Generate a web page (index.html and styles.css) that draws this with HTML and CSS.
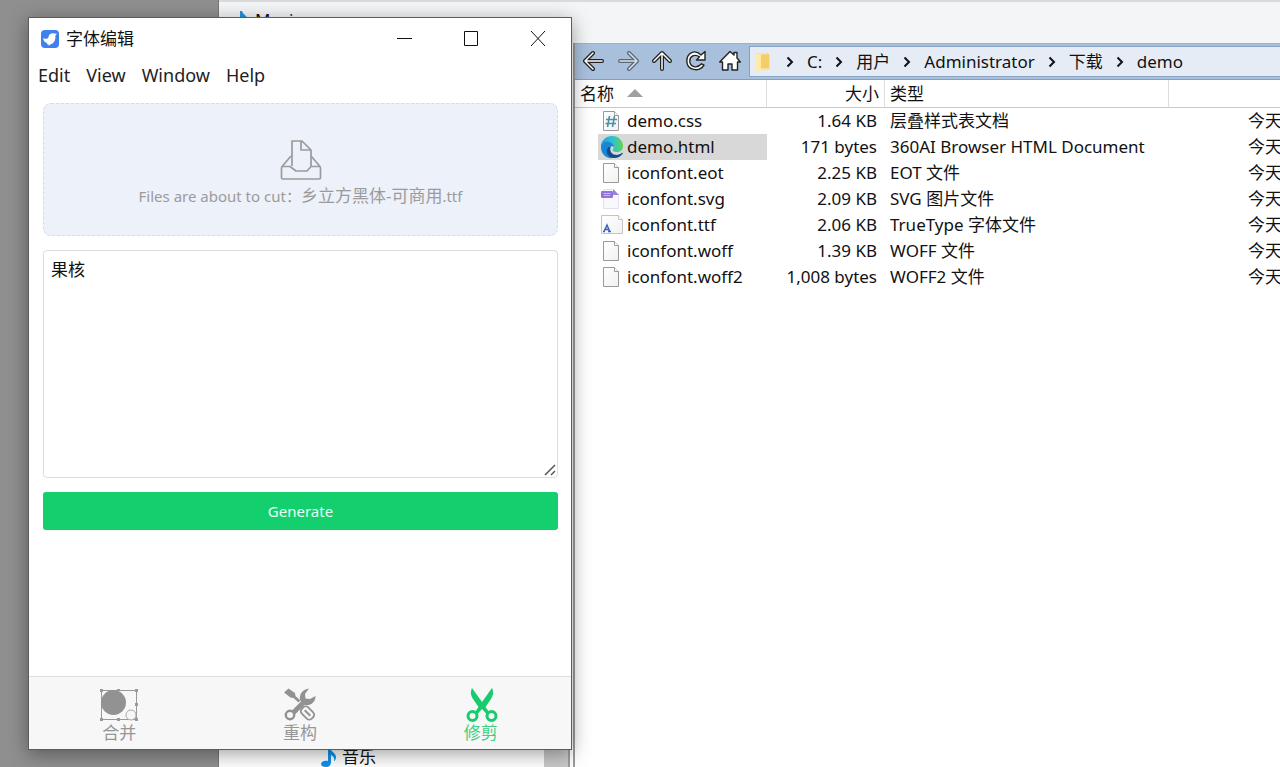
FILE: index.html
```html
<!DOCTYPE html>
<html lang="zh-CN">
<head>
<meta charset="utf-8">
<title>字体编辑</title>
<link rel="stylesheet" href="styles.css">
</head>
<body>
<div class="desktop">
  <section class="explorer">
    <header class="explorer-title">
      <svg class="note" width="16" height="20" viewBox="0 0 16 20"><path d="M7 1h2c1 4 6 5 6 9 0 2-1 4-2 4 1-3-1-5-3-6v7c0 3-2 5-5 5s-5-1-5-3 3-4 7-3z" fill="#1e96e0"/></svg>
      <span>Music</span>
    </header>
    <div class="explorer-body">
      <aside class="tree">
        <ul class="tree-list">
          <li class="tree-item">
            <svg class="note" width="16" height="20" viewBox="0 0 16 20"><path d="M7 1h2c1 4 6 5 6 9 0 2-1 4-2 4 1-3-1-5-3-6v7c0 3-2 5-5 5s-5-1-5-3 3-4 7-3z" fill="#0f92ec"/></svg>
            <span>音乐</span>
          </li>
        </ul>
        <div class="tree-scroll"></div>
      </aside>
      <div class="files">
        <nav class="toolbar">
          <button class="tool" aria-label="后退"><svg width="22" height="22" viewBox="0 0 22 22"><g class="ink-out"><path d="M3 11h16M10 3l-8 8 8 8"/></g><g class="ink-in"><path d="M3 11h16M10 3l-8 8 8 8"/></g></svg></button>
          <button class="tool dim" aria-label="前进"><svg width="22" height="22" viewBox="0 0 22 22"><g class="ink-out"><path d="M3 11h16M12 3l8 8-8 8"/></g><g class="ink-in"><path d="M3 11h16M12 3l8 8-8 8"/></g></svg></button>
          <button class="tool" aria-label="向上"><svg width="22" height="22" viewBox="0 0 22 22"><g class="ink-out"><path d="M11 19V3M3 11l8-8 8 8"/></g><g class="ink-in"><path d="M11 19V3M3 11l8-8 8 8"/></g></svg></button>
          <button class="tool" aria-label="刷新"><svg width="22" height="22" viewBox="0 0 22 22"><path d="M16 5 L20 1.500 V10 H11.500 L14.500 6.800 C9.500 3.500 4.800 6.500 4.800 11 C4.800 17 12 19 16.500 13.800 L19 15.200 C14.500 22.500 1.800 20.500 1.800 11 C1.800 2.500 10 -1 16 5Z" fill="#fff" stroke="#222" stroke-width="1.4" stroke-linejoin="round"/></svg></button>
          <button class="tool" aria-label="主页"><svg width="22" height="22" viewBox="0 0 22 22"><path d="M11 1.500 15 5V2.500h3V8l3.300 4H18.500v8H13v-6H9v6H3.500v-8H.7z" fill="#fff" stroke="#222" stroke-width="1.4" stroke-linejoin="round"/></svg></button>
          <div class="path">
            <svg width="15" height="20" viewBox="0 0 15 20"><path d="M0 1h12l2 2v14l-2 1H5l-3 2-2-1z" fill="#ffe08f"/><path d="M5 3l8-1v14H5z" fill="#f4cd66"/><path d="M0 1l5 2v15l-3 2-2-1z" fill="#ffe9ab"/></svg>
            <svg class="chev first" width="8" height="12" viewBox="0 0 8 12"><path d="M1.500 1.500 6 6l-4.500 4.500"/></svg>
            <button class="crumb">C:</button>
            <svg class="chev" width="8" height="12" viewBox="0 0 8 12"><path d="M1.500 1.500 6 6l-4.500 4.500"/></svg>
            <button class="crumb">用户</button>
            <svg class="chev" width="8" height="12" viewBox="0 0 8 12"><path d="M1.500 1.500 6 6l-4.500 4.500"/></svg>
            <button class="crumb">Administrator</button>
            <svg class="chev" width="8" height="12" viewBox="0 0 8 12"><path d="M1.500 1.500 6 6l-4.500 4.500"/></svg>
            <button class="crumb">下载</button>
            <svg class="chev" width="8" height="12" viewBox="0 0 8 12"><path d="M1.500 1.500 6 6l-4.500 4.500"/></svg>
            <button class="crumb">demo</button>
          </div>
        </nav>
        <svg width="0" height="0" class="defs">
          <defs>
            <linearGradient id="page" x1="0" y1="0" x2="1" y2="1"><stop offset="0" stop-color="#fff"/><stop offset="1" stop-color="#f1f1f1"/></linearGradient>
            <linearGradient id="edgeTop" x1="0" y1="0" x2="1" y2="0"><stop offset="0" stop-color="#1f9fe0"/><stop offset=".5" stop-color="#2cc0d6"/><stop offset="1" stop-color="#5fd653"/></linearGradient>
            <symbol id="doc" viewBox="0 0 24 24"><path d="M3.500 2.500h11l4 4v15h-15z" fill="url(#page)" stroke="#999"/><path d="M14.500 2.500v4h4" fill="#fff" stroke="#999"/></symbol>
          </defs>
        </svg>
        <table class="list">
          <colgroup><col class="c-name"><col class="c-size"><col class="c-type"><col></colgroup>
          <thead><tr>
            <th>名称 <svg class="sort" width="16" height="8" viewBox="0 0 16 8"><path d="M8 0l8 8H0z" fill="#a0a0a0"/></svg></th>
            <th class="size">大小</th><th>类型</th><th></th>
          </tr></thead>
          <tbody>
            <tr><td class="name"><div class="file"><svg width="24" height="24"><use href="#doc"/><g stroke="#4a8fa5" stroke-width="1.6" fill="none"><path d="M9.500 7 7.500 18M14.500 7l-2 11M6 10.500h11M5.500 14.500h10.500"/></g></svg><span>demo.css</span></div></td><td class="size">1.64 KB</td><td>层叠样式表文档</td><td class="date">今天</td></tr>
            <tr><td class="name"><div class="file selected"><svg width="24" height="24" viewBox="0 0 24 24"><path d="M1 12C1 5 6 1 12 1c7 0 11 5 11 10 0 4-3 6-6 6-4 0-5-2-4-3 2-2 0-6-4-6-5 0-7 2-8 4z" fill="url(#edgeTop)"/><path d="M1 12c0-4 4-6 8-5 3 .5 5 3 5 5-3-2-6 0-6 4 0 3 2 6 5 7C6 24 1 19 1 12z" fill="#1b86d6"/><path d="M11 11.500c-2 3 0 7 3 8 3 1 6 0 8-1.500 1-.5 1 0 .5 1C20 22 17 23.500 13 23c-5-1-7-5-6-8.500.5-2 2-3 4-3z" fill="#124a8c"/></svg><span>demo.html</span></div></td><td class="size">171 bytes</td><td>360AI Browser HTML Document</td><td class="date">今天</td></tr>
            <tr><td class="name"><div class="file"><svg width="24" height="24"><use href="#doc"/></svg><span>iconfont.eot</span></div></td><td class="size">2.25 KB</td><td>EOT 文件</td><td class="date">今天</td></tr>
            <tr><td class="name"><div class="file"><svg width="24" height="24" viewBox="0 0 24 24"><path d="M3.500 2.500h10l5 5v14h-15z" fill="#faf8ff" stroke="#e4def5"/><path d="M13 2l6 6h-6z" fill="#9a82e0"/><rect x="1" y="4" width="12" height="7" rx="1" fill="#8f76dc"/><path d="M3.500 6.500h7M4 8.500h6" stroke="#c5b8f0"/></svg><span>iconfont.svg</span></div></td><td class="size">2.09 KB</td><td>SVG 图片文件</td><td class="date">今天</td></tr>
            <tr><td class="name"><div class="file"><svg width="24" height="24" viewBox="0 0 24 24"><path d="M1.500 2.500h17l4 4v14h-21z" fill="url(#page)" stroke="#c4c4c4"/><path d="M18.500 2.500v4h4" fill="#fff" stroke="#c4c4c4"/><path d="M4 18.500 7 12l2.500 6M5 16.500h4M3 18.500h2M8 18.500h3" stroke="#3a62c4" stroke-width="1.500" fill="none"/></svg><span>iconfont.ttf</span></div></td><td class="size">2.06 KB</td><td>TrueType 字体文件</td><td class="date">今天</td></tr>
            <tr><td class="name"><div class="file"><svg width="24" height="24"><use href="#doc"/></svg><span>iconfont.woff</span></div></td><td class="size">1.39 KB</td><td>WOFF 文件</td><td class="date">今天</td></tr>
            <tr><td class="name"><div class="file"><svg width="24" height="24"><use href="#doc"/></svg><span>iconfont.woff2</span></div></td><td class="size">1,008 bytes</td><td>WOFF2 文件</td><td class="date">今天</td></tr>
          </tbody>
        </table>
      </div>
    </div>
  </section>

  <main class="editor">
    <header class="titlebar">
      <svg width="20" height="20" viewBox="0 0 20 20"><rect x="1" y="1" width="18" height="18" rx="4" fill="#3f80ee"/><path d="M3 9c2 1.500 5 1 5.500-1C9 5 11.500 3.500 14 4.500l3 .2-1.700 1.800c.7 5-2 8.500-5.300 9l-1 1.500-.5-1.500-2-.5 1-1C5 13.500 3.500 12 3 9z" fill="#fff"/></svg>
      <h1 class="title">字体编辑</h1>
      <div class="controls">
        <button class="ctl" aria-label="最小化"><svg width="16" height="16" viewBox="0 0 16 16"><path d="M1 7.500h15"/></svg></button>
        <button class="ctl" aria-label="最大化"><svg width="16" height="16" viewBox="0 0 16 16"><path d="M1.500 .5h13v14h-13z"/></svg></button>
        <button class="ctl" aria-label="关闭"><svg width="16" height="16" viewBox="0 0 16 16"><path d="M1 0l14 15M15 0 1 15"/></svg></button>
      </div>
    </header>
    <nav class="menu">
      <button class="menu-item">Edit</button>
      <button class="menu-item">View</button>
      <button class="menu-item">Window</button>
      <button class="menu-item">Help</button>
    </nav>
    <div class="content">
      <button class="drop">
        <svg width="42" height="42" viewBox="0 0 42 42" fill="none" stroke="#9b9b9b" stroke-width="1.700" stroke-linejoin="round"><path d="M12 27V2h10l9 9v16M21 2v9h10M11 17 2 27.500M31 17l9 10.500"/><path d="M3 27.500h7l6 4.500h11l4-4.500h8q1.500 0 1.500 1.500v9.500q0 1.500-1.500 1.500H3q-1.500 0-1.500-1.500V29q0-1.500 1.500-1.500z"/></svg>
        <span class="drop-text">Files are about to cut：<span class="cjk">乡立方黑体-可商用</span>.ttf</span>
      </button>
      <div class="field">
        <textarea class="text" aria-label="文字">果核</textarea>
        <svg class="grip" width="14" height="14" viewBox="0 0 14 14"><path d="M2 12 12 2M8 12l4-4" stroke="#555" stroke-width="1.500"/></svg>
      </div>
      <button class="generate">Generate</button>
    </div>
    <nav class="tabs">
      <button class="tab">
        <svg width="40" height="36" viewBox="0 0 40 36"><path d="M2.500 3.500h35v29h-35z" fill="none" stroke="#999"/><circle cx="14.500" cy="15.500" r="12.500" fill="#929292"/><circle cx="32" cy="28" r="5" fill="#f7f7f7" stroke="#aaa"/><path d="M1 2h3v3H1zM36 2h3v3h-3zM1 31h3v3H1zM36 31h3v3h-3zM18 2h3v2h-3zM36 16h3v3h-3zM18 31h3v3h-3z" fill="#999"/></svg>
        <span>合并</span>
      </button>
      <button class="tab">
        <svg width="36" height="36" viewBox="0 0 36 36"><path d="M2 5.500 6.500 1.500 13 6l.5 3 5 4.500-2 2-5-4.500-3-.5z" fill="#929292"/><path d="M11.500 25.500 23 14" stroke="#929292" stroke-width="5"/><path d="M33.500 9c0 6-4.500 10-10.500 9l-5-5C17 7 21 2 27 1.500l-4 5.500.5 4.500 4.500.5z" fill="#929292"/><circle cx="8" cy="28" r="4.200" fill="none" stroke="#929292" stroke-width="2.400"/><g transform="rotate(-45 25.500 26)" fill="none" stroke="#929292"><rect x="21" y="19" width="9" height="14" rx="3.500" stroke-width="1.800"/><path d="M25.500 22v8" stroke-width="2"/></g></svg>
        <span>重构</span>
      </button>
      <button class="tab active">
        <svg width="36" height="36" viewBox="0 0 36 36"><path d="M9 1c-2 4-1 8 1 11l5.500 8-3.500 5 2.500 2 4.500-5 4.500 5 2.500-2-3.500-5 5.500-8c2-3 3-7 1-11L19 15z" fill="#16cc6c"/><g fill="none" stroke="#16cc6c" stroke-width="3"><circle cx="9.500" cy="29" r="4.500"/><circle cx="28.500" cy="29" r="4.500"/></g></svg>
        <span>修剪</span>
      </button>
    </nav>
  </main>
</div>
</body>
</html>
```
FILE: styles.css
```css
* { box-sizing: border-box; }
body {
  margin: 0;
  font-family: "Noto Sans", "Noto Sans CJK SC", sans-serif;
  font-size: 17px;
  line-height: 26px;
  color: #111;
}
button {
  margin: 0;
  padding: 0;
  border: 0;
  background: none;
  font: inherit;
  color: inherit;
}
svg { display: block; flex: none; }

.desktop {
  position: relative;
  display: flex;
  height: 100vh;
  padding-left: 218px;
  background: #8f8f8f;
  overflow: hidden;
}

/* File manager */
.explorer {
  flex: 1;
  min-width: 0;
  display: flex;
  flex-direction: column;
  background: #fff;
  border-left: 1px solid #777;
}
.explorer-title {
  display: flex;
  align-items: center;
  gap: 6px;
  height: 43px;
  padding: 0 14px 6px;
  background: #f4f5f7;
  border-top: 2px solid #d8dadc;
}
.explorer-body { flex: 1; display: flex; min-height: 0; }
.tree {
  flex: none;
  display: flex;
  width: 356px;
  border-right: 7px double #9c9c9c;
}
.tree-list {
  flex: 1;
  display: flex;
  flex-direction: column;
  justify-content: flex-end;
  margin: 0;
  padding: 0 0 0 102px;
  list-style: none;
}
.tree-item { display: flex; align-items: center; gap: 5px; height: 20px; }
.tree-scroll { width: 24px; background: #c9c9c9; }
.files { flex: 1; min-width: 0; overflow: hidden; }
.defs { position: absolute; }

.toolbar {
  display: flex;
  align-items: center;
  height: 37px;
  padding-left: 2px;
  background: #a9c0dc;
  border-top: 1px solid #9db3ca;
  border-bottom: 1px solid #8f9dad;
}
.tool { display: flex; align-items: center; justify-content: center; width: 34px; height: 32px; padding-bottom: 2px; }
.dim { opacity: .55; }
.ink-out, .ink-in { fill: none; stroke-linecap: round; stroke-linejoin: round; }
.ink-out { stroke: #222; stroke-width: 4; }
.ink-in { stroke: #fff; stroke-width: 1.5; }
.path {
  flex: 1;
  display: flex;
  align-items: center;
  gap: 13px;
  height: 31px;
  margin-left: 2px;
  padding-left: 6px;
  background: #e6ecf5;
  border: 1px solid #86a2c4;
  border-right: 0;
}
.chev { fill: none; stroke: #111; stroke-width: 2; }
.first { margin-left: 2px; }
.crumb { white-space: nowrap; }

.list { width: 100%; border-collapse: separate; border-spacing: 0; table-layout: fixed; }
.c-name { width: 192px; }
.c-size { width: 118px; }
.c-type { width: 284px; }
.list th {
  height: 28px;
  padding: 1px 5px 0;
  border-right: 1px solid #dedede;
  border-bottom: 1px solid #c8c8c8;
  font-weight: 400;
  text-align: left;
}
.list th:last-child { border-right: 0; }
.list td { height: 26px; padding: 0 5px; white-space: nowrap; overflow: hidden; }
.list .size { text-align: right; }
.list td.size { padding-right: 8px; }
.list td.name { padding: 0 0 0 23px; }
.list td.date { padding: 0 0 0 79px; }
.sort { display: inline-block; margin-left: 9px; vertical-align: 3px; }
.file { display: flex; align-items: center; gap: 3px; height: 26px; padding-left: 2px; }
.selected { background: #d8d8d8; }

/* Font editor window */
.editor {
  position: absolute;
  top: 17px;
  bottom: 17px;
  left: 28px;
  width: 544px;
  display: flex;
  flex-direction: column;
  background: #fff;
  border: 1px solid #5c5c5c;
  box-shadow: 0 4px 18px rgba(0, 0, 0, .38);
}
.titlebar { display: flex; align-items: center; gap: 6px; height: 41px; padding-left: 11px; }
.title { margin: 0; font-size: 17px; font-weight: 400; }
.controls { display: flex; margin-left: auto; }
.ctl { display: flex; align-items: center; justify-content: center; width: 67px; height: 41px; }
.ctl svg { fill: none; stroke: #111; }
.menu { display: flex; gap: 16px; height: 32px; padding: 0 9px; }
.menu-item { height: 32px; font-size: 18px; color: #222; }
.content {
  flex: 1;
  display: flex;
  flex-direction: column;
  gap: 14px;
  padding: 12px 13px 0 14px;
}
.drop {
  display: flex;
  flex-direction: column;
  align-items: center;
  justify-content: center;
  gap: 2px;
  height: 133px;
  padding-top: 8px;
  background: #edf1fa;
  border: 1px dashed #d3dcea;
  border-radius: 8px;
}
.drop-text { font-size: 15px; color: #9b9b9b; white-space: nowrap; }
.cjk { font-size: 17px; }
.field { position: relative; display: flex; height: 228px; }
.text {
  flex: 1;
  padding: 6px 7px;
  border: 1px solid #dcdcdc;
  border-radius: 4px;
  font: inherit;
  color: #111;
  resize: none;
}
.grip { position: absolute; right: 1px; bottom: 1px; }
.generate {
  height: 38px;
  background: #14cf6e;
  border-radius: 3px;
  font-size: 15px;
  color: #e9fff2;
}
.tabs {
  display: grid;
  grid-template-columns: repeat(3, 1fr);
  height: 73px;
  background: #f7f7f7;
  border-top: 1px solid #dedede;
}
.tab {
  display: flex;
  flex-direction: column;
  align-items: center;
  padding-top: 10px;
  line-height: 20px;
  color: #969696;
}
.active { color: #3fd084; }
```
